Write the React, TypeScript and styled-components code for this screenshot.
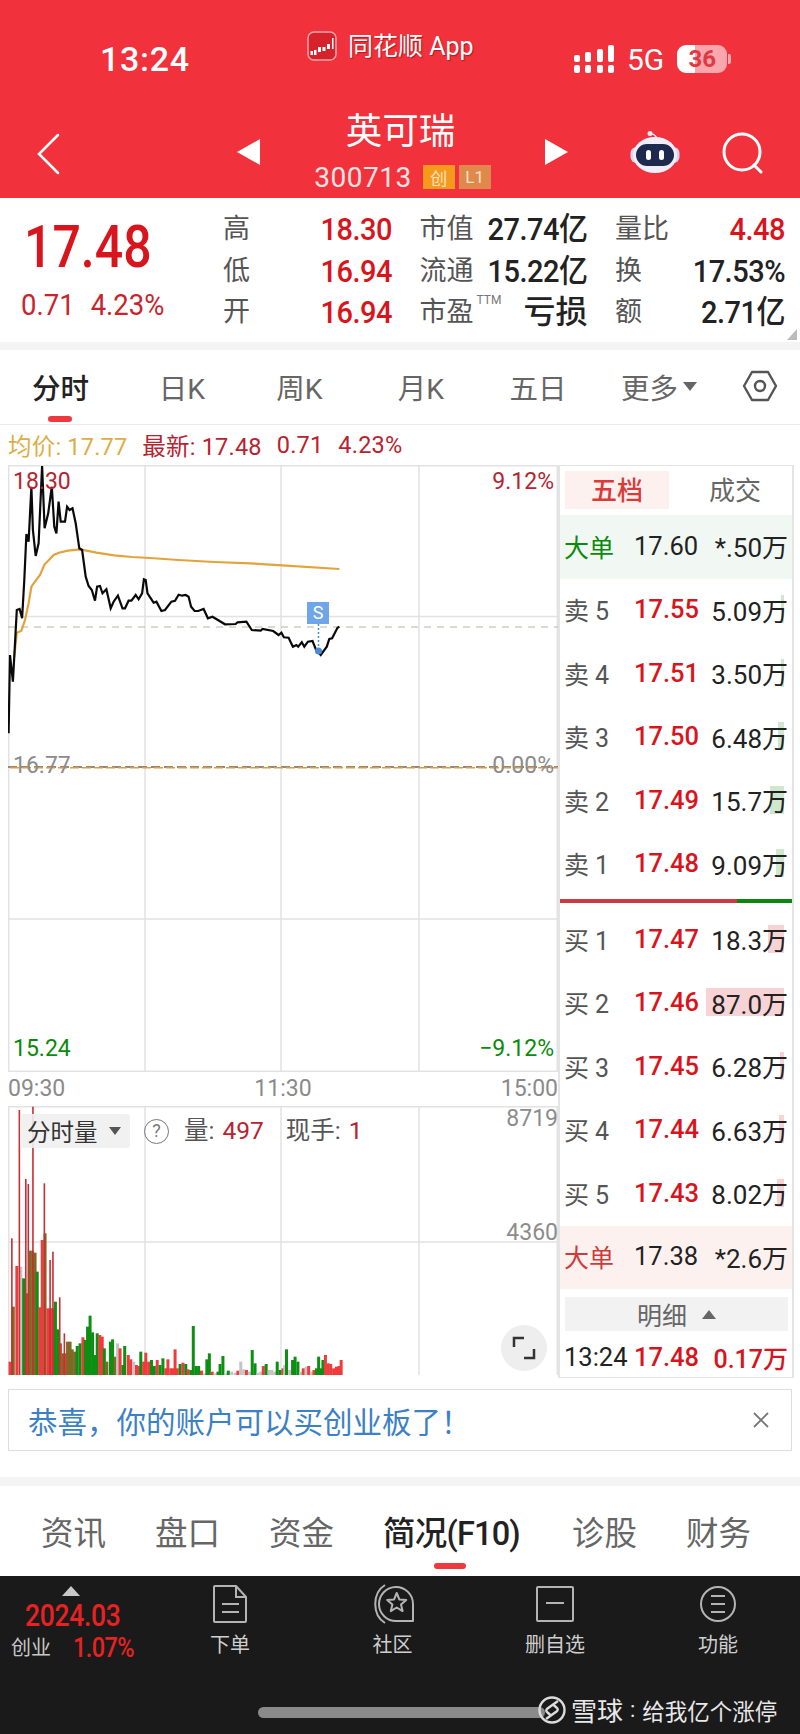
import styled, { createGlobalStyle } from 'styled-components'

const RED = '#d8141c'
const GREEN = '#0a8a0a'
const SANS = `Roboto, 'Noto Sans CJK SC', sans-serif`

const GlobalStyle = createGlobalStyle`
  html, body { margin: 0; padding: 0; background: #fff; }
  * { box-sizing: border-box; }
  body { font-family: ${SANS}; }
`

// price line, in coordinates read off the reference crop
const priceLine = [
  [24, 910], [28, 675], [36, 755], [42, 640], [47, 540], [55, 537], [62, 565], [68, 450], [74, 312], [80, 335],
  [88, 170], [92, 300], [100, 378], [108, 340], [118, 108], [125, 295], [135, 250], [145, 170], [152, 290], [158, 310],
  [164, 215], [170, 275], [182, 275], [188, 230], [195, 240], [203, 235], [212, 280], [222, 355], [230, 360], [240, 440],
  [248, 468], [257, 480], [266, 512], [272, 470], [280, 468], [287, 490], [298, 478], [310, 535], [318, 515], [330, 497],
  [343, 535], [350, 535], [360, 512], [368, 512], [380, 495], [388, 508], [398, 490], [403, 448], [408, 450], [413, 490],
  [430, 518], [438, 515], [452, 543], [462, 540], [480, 515], [490, 512], [500, 494], [510, 497], [520, 495], [528, 500],
  [535, 530], [545, 543], [555, 543], [570, 537], [582, 565], [595, 560], [610, 570], [630, 583], [660, 582], [665, 577],
  [690, 575], [705, 600], [730, 602], [735, 597], [765, 603], [780, 615], [788, 608], [795, 622], [808, 623], [820, 650],
  [830, 645], [835, 650], [845, 637], [852, 650], [862, 635], [875, 633], [885, 660], [898, 675], [915, 650], [922, 627],
  [930, 625], [945, 593], [950, 590],
]

const avgLine = [
  [40, 680], [47, 608], [60, 602], [70, 570], [80, 520], [88, 470], [100, 452], [112, 435], [125, 403], [135, 392],
  [150, 375], [165, 368], [190, 362], [225, 358], [270, 368], [320, 376], [370, 381], [420, 384], [500, 390], [600, 396],
  [700, 400], [790, 406], [950, 417],
]

const toPricePoints = (pts: number[][]) => pts.map(([x, y]) => `${(x / 2.8 - 8).toFixed(1)},${(y / 3 - 35).toFixed(1)}`).join(' ')

const volColors: Record<string, string> = { r: '#ee3b3b', g: '#0d8f14', o: '#7d6a24', a: '#c4c4c4' }

const volBars: [string, number, number][] = [
  ['r', 24, 905], ['o', 33, 740], ['r', 43, 618], ['a', 54, 620], ['g', 62, 655], ['r', 70, 700], ['o', 79, 572], ['o', 87, 572],
  ['o', 94, 578], ['g', 100, 635], ['r', 107, 742], ['r', 114, 540], ['o', 122, 520], ['r', 130, 745], ['r', 137, 745], ['r', 144, 745],
  ['g', 151, 725], ['g', 158, 808], ['r', 165, 850], ['o', 172, 880], ['r', 179, 880], ['o', 185, 845], ['o', 192, 845], ['o', 198, 868],
  ['o', 205, 875], ['g', 212, 858], ['g', 220, 850], ['r', 228, 832], ['g', 235, 840], ['g', 241, 800], ['g', 248, 767], ['g', 255, 817],
  ['g', 262, 885], ['g', 268, 820], ['r', 275, 825], ['r', 282, 830], ['g', 288, 865], ['o', 295, 905], ['g', 305, 845], ['g', 311, 838],
  ['o', 318, 890], ['a', 325, 850], ['r', 332, 865], ['g', 340, 915], ['g', 345, 858], ['r', 355, 885], ['r', 362, 898], ['a', 370, 905],
  ['r', 378, 915], ['r', 385, 918], ['g', 390, 875], ['r', 398, 905], ['r', 404, 878], ['r', 412, 905], ['g', 420, 900], ['g', 428, 918],
  ['r', 436, 900], ['g', 444, 915], ['g', 452, 895], ['r', 460, 925], ['r', 466, 898], ['r', 474, 925], ['r', 480, 925], ['r', 486, 868],
  ['r', 492, 925], ['g', 500, 912], ['r', 508, 908], ['g', 516, 912], ['r', 522, 928], ['g', 530, 930], ['g', 537, 798], ['g', 545, 918],
  ['g', 552, 918], ['r', 560, 932], ['a', 568, 940], ['g', 575, 898], ['g', 582, 880], ['r', 590, 935], ['a', 598, 940], ['g', 606, 935],
  ['g', 612, 912], ['g', 620, 888], ['a', 628, 940], ['g', 635, 932], ['a', 645, 935], ['a', 655, 938], ['r', 662, 932], ['a', 670, 905],
  ['a', 678, 928], ['r', 686, 930], ['a', 694, 935], ['g', 702, 870], ['g', 710, 910], ['a', 718, 938], ['a', 726, 935], ['r', 733, 918],
  ['g', 741, 912], ['a', 750, 930], ['a', 757, 930], ['a', 765, 935], ['g', 772, 905], ['g', 780, 930], ['r', 788, 925], ['a', 793, 915],
  ['g', 798, 868], ['a', 807, 930], ['g', 815, 900], ['g', 822, 890], ['g', 830, 905], ['a', 838, 935], ['r', 845, 925], ['a', 853, 920],
  ['r', 860, 918], ['a', 868, 935], ['r', 875, 930], ['g', 882, 925], ['g', 888, 890], ['g', 895, 925], ['g', 900, 900], ['r', 907, 885],
  ['r', 915, 910], ['r', 922, 912], ['r', 930, 925], ['r', 938, 920], ['r', 945, 918], ['r', 951, 900],
]

const volSpikes = [[31, 535], [52, 150], [70, 357], [77, 372], [90, 140], [122, 370], [138, 600], [146, 575], [165, 712], [178, 820]]

const sellRows = [
  { label: '卖', n: '5', price: '17.55', vol: '5.09万', bar: 3 },
  { label: '卖', n: '4', price: '17.51', vol: '3.50万', bar: 3 },
  { label: '卖', n: '3', price: '17.50', vol: '6.48万', bar: 6 },
  { label: '卖', n: '2', price: '17.49', vol: '15.7万', bar: 14 },
  { label: '卖', n: '1', price: '17.48', vol: '9.09万', bar: 8 },
]

const buyRows = [
  { label: '买', n: '1', price: '17.47', vol: '18.3万', bar: 16 },
  { label: '买', n: '2', price: '17.46', vol: '87.0万', bar: 78 },
  { label: '买', n: '3', price: '17.45', vol: '6.28万', bar: 4 },
  { label: '买', n: '4', price: '17.44', vol: '6.63万', bar: 5 },
  { label: '买', n: '5', price: '17.43', vol: '8.02万', bar: 7 },
]

const AppIcon = () => (
  <svg width='30' height='30' viewBox='0 0 30 30'>
    <rect x='1' y='1' width='28' height='28' rx='6' fill='#d6222a' stroke='#f7a5a9' strokeWidth='1.5' />
    <g fill='#fff'>
      <rect x='3.5' y='20' width='2.5' height='4' />
      <rect x='7' y='19' width='2.5' height='5' />
      <rect x='11' y='16' width='3' height='5' />
      <rect x='15.5' y='16' width='3' height='4' />
      <rect x='20' y='13' width='3' height='5' />
      <rect x='25' y='7' width='1.5' height='11' />
    </g>
  </svg>
)

const SignalIcon = () => (
  <svg width='40' height='28' viewBox='0 0 40 28' fill='#fff'>
    <rect x='0' y='10' width='6' height='7' rx='2' />
    <rect x='0' y='20' width='6' height='8' rx='2' />
    <rect x='11' y='7' width='6' height='10' rx='2' />
    <rect x='11' y='20' width='6' height='8' rx='2' />
    <rect x='23' y='4' width='6' height='13' rx='2' />
    <rect x='23' y='20' width='6' height='8' rx='2' />
    <rect x='34' y='0' width='6' height='17' rx='2' />
    <rect x='34' y='20' width='6' height='8' rx='2' />
  </svg>
)

const RobotIcon = () => (
  <svg width='50' height='46' viewBox='0 0 50 46'>
    <circle cx='20' cy='3.5' r='2.5' fill='#f3e6f6' />
    <path d='M21 4c3 0 5 2 6 5' fill='none' stroke='#f3e6f6' strokeWidth='1.5' />
    <rect x='0.5' y='17' width='49' height='16' rx='6' fill='#d9d4f2' />
    <ellipse cx='25' cy='25' rx='22' ry='18' fill='#f1eefb' />
    <rect x='6' y='14' width='38' height='22' rx='11' fill='#1d2a4d' />
    <rect x='16' y='20' width='5' height='10' rx='2.5' fill='#fff' />
    <rect x='29' y='20' width='5' height='10' rx='2.5' fill='#fff' />
  </svg>
)

const SearchIcon = () => (
  <svg width='42' height='42' viewBox='0 0 42 42' fill='none' stroke='#fff' strokeWidth='3'>
    <circle cx='20' cy='20' r='18' />
    <path d='M32 33l7 7' strokeLinecap='round' />
  </svg>
)

const HexIcon = () => (
  <svg width='36' height='32' viewBox='0 0 36 32' fill='none' stroke='#555' strokeWidth='2.4'>
    <path d='M10 2h16l8 14-8 14H10L2 16z' strokeLinejoin='round' />
    <circle cx='18' cy='16' r='5' />
  </svg>
)

const ExpandIcon = () => (
  <svg width='24' height='24' viewBox='0 0 24 24' fill='none' stroke='#333' strokeWidth='2.5'>
    <path d='M2 11V2h10M22 13v9H12' />
  </svg>
)

const DocIcon = () => (
  <svg width='36' height='40' viewBox='0 0 36 40' fill='none' stroke='#b4b4b4' strokeWidth='2'>
    <path d='M2 3a1 1 0 0 1 1-1h21l10 11v24a1 1 0 0 1-1 1H3a1 1 0 0 1-1-1z' strokeLinejoin='round' />
    <path d='M24 2v11h10M10 20h17M10 28h17' />
  </svg>
)

const CommunityIcon = () => (
  <svg width='42' height='42' viewBox='0 0 42 42' fill='none' stroke='#b4b4b4' strokeWidth='2'>
    <path d='M13 2C0 10 0 32 13 40' />
    <path d='M41 21v17H24.7A17 17 0 1 1 41 21z' strokeLinejoin='round' />
    <path d='M24.7 10l2.6 6.4 6.900.5-5.200 4.500 1.600 6.700-5.900-3.600-5.900 3.600 1.600-6.700-5.200-4.500 6.900-.5z' strokeLinejoin='round' />
  </svg>
)

const MinusBoxIcon = () => (
  <svg width='40' height='38' viewBox='0 0 40 38' fill='none' stroke='#b4b4b4' strokeWidth='2'>
    <rect x='2' y='2' width='36' height='34' rx='1' />
    <path d='M11 18h18' />
  </svg>
)

const MenuCircleIcon = () => (
  <svg width='38' height='38' viewBox='0 0 38 38' fill='none' stroke='#b4b4b4' strokeWidth='2'>
    <circle cx='19' cy='19' r='17' />
    <path d='M12 11h14M12 19h14M12 27h14' />
  </svg>
)

const XueqiuLogo = () => (
  <svg width='28' height='28' viewBox='0 0 28 28' fill='none' stroke='#dcdcdc' strokeWidth='2.4'>
    <circle cx='14' cy='14' r='12.5' />
    <path d='M20 5L9.5 12.5q-2.500 2 0 4l3.500 3' />
    <path d='M8 23l10.5-7.5q2.500-2 0-4L15 8.500' />
  </svg>
)

const OrderRow = ({ label, n, price, vol, bar, side }: { label: string; n: string; price: string; vol: string; bar: number; side: 'sell' | 'buy' }) => (
  <Row>
    <RowLabel>
      {label}
      <RowNum>{n}</RowNum>
    </RowLabel>
    <RowPrice>{price}</RowPrice>
    <RowVol>
      <VolBar $side={side} style={{ width: bar }} />
      <VolText>{vol}</VolText>
    </RowVol>
  </Row>
)

const App = () => {
  return (
    <Page>
      <GlobalStyle />
      <Header>
        <StatusBar>
          <Time>13:24</Time>
          <AppBadge>
            <AppIcon />
            <AppName>同花顺 App</AppName>
          </AppBadge>
          <StatusRight>
            <SignalIcon />
            <NetworkText>5G</NetworkText>
            <Battery>36</Battery>
          </StatusRight>
        </StatusBar>
        <TitleRow>
          <BackButton>
            <svg width='24' height='42' viewBox='0 0 24 42' fill='none' stroke='#fff' strokeWidth='2.5'>
              <path d='M22 2L3 21l19 19' strokeLinecap='round' />
            </svg>
          </BackButton>
          <Arrow $dir='left' />
          <TitleBlock>
            <StockName>英可瑞</StockName>
            <CodeRow>
              <StockCode>300713</StockCode>
              <Tag $bg='#f59a1c'>创</Tag>
              <Tag $bg='#df8a4c'>L1</Tag>
            </CodeRow>
          </TitleBlock>
          <Arrow $dir='right' />
          <TitleIcons>
            <RobotIcon />
            <SearchIcon />
          </TitleIcons>
        </TitleRow>
      </Header>

      <Stats>
        <PriceBlock>
          <BigPrice>17.48</BigPrice>
          <PriceChange>
            <span>0.71</span>
            <span>4.23%</span>
          </PriceChange>
        </PriceBlock>
        <StatsGrid>
          <StatCell><StatLabel>高</StatLabel><StatValue $red>18.30</StatValue></StatCell>
          <StatCell><StatLabel>市值</StatLabel><StatValue>27.74亿</StatValue></StatCell>
          <StatCell><StatLabel>量比</StatLabel><StatValue $red>4.48</StatValue></StatCell>
          <StatCell><StatLabel>低</StatLabel><StatValue $red>16.94</StatValue></StatCell>
          <StatCell><StatLabel>流通</StatLabel><StatValue>15.22亿</StatValue></StatCell>
          <StatCell><StatLabel>换</StatLabel><StatValue>17.53%</StatValue></StatCell>
          <StatCell><StatLabel>开</StatLabel><StatValue $red>16.94</StatValue></StatCell>
          <StatCell>
            <StatLabel>市盈<Ttm>TTM</Ttm></StatLabel>
            <LossValue>亏损</LossValue>
          </StatCell>
          <StatCell><StatLabel>额</StatLabel><StatValue>2.71亿</StatValue></StatCell>
        </StatsGrid>
        <CornerMark />
      </Stats>

      <Band />

      <ChartTabs>
        <ChartTab $w={121} $active>分时<TabDot /></ChartTab>
        <ChartTab $w={122}>日K</ChartTab>
        <ChartTab $w={113}>周K</ChartTab>
        <ChartTab $w={130}>月K</ChartTab>
        <ChartTab $w={104}>五日</ChartTab>
        <ChartTab $w={138}>更多<MoreCaret /></ChartTab>
        <HexWrap><HexIcon /></HexWrap>
      </ChartTabs>

      <Legend>
        <LegendAvg>均价: 17.77</LegendAvg>
        <LegendLast>最新: 17.48</LegendLast>
        <LegendLast>0.71</LegendLast>
        <LegendLast>4.23%</LegendLast>
      </Legend>

      <Market>
        <ChartColumn>
          <PriceChart>
            <ChartSvg viewBox='0 0 550 607'>
              <g stroke='#e2e2e2' strokeWidth='1.5' fill='none'>
                <rect x='0.7' y='0.7' width='548.6' height='605.6' />
                <path d='M137 0v607M273 0v607M411 0v607M0 151.5h550M0 454h550' />
              </g>
              <path d='M0 162h550' stroke='#b9b3a3' strokeWidth='1' strokeDasharray='7 6' />
              <path d='M0 302h550' stroke='#8a8a8a' strokeWidth='2' strokeDasharray='9 4' />
              <path d='M2 302.8h548' stroke='#e09a3a' strokeWidth='1.6' strokeDasharray='9 3' />
              <polyline points={toPricePoints(avgLine)} fill='none' stroke='#e3a33c' strokeWidth='2.2' />
              <polyline points={toPricePoints(priceLine)} fill='none' stroke='#0a0a0a' strokeWidth='2.2' />
              <path d='M310.5 159v26' stroke='#4a8ad8' strokeWidth='1.5' strokeDasharray='2 2' />
              <circle cx='310.5' cy='186' r='3.5' fill='#4a8ad8' />
            </ChartSvg>
            <ChartLabel $top={2} $left={5} $color='#b8232f'>18.30</ChartLabel>
            <ChartLabel $top={2} $right={4} $color='#b8232f'>9.12%</ChartLabel>
            <ChartLabel $top={286} $left={5} $color='#8c8c8c'>16.77</ChartLabel>
            <ChartLabel $top={286} $right={4} $color='#8c8c8c'>0.00%</ChartLabel>
            <ChartLabel $top={569} $left={5} $color={GREEN}>15.24</ChartLabel>
            <ChartLabel $top={569} $right={4} $color={GREEN}>−9.12%</ChartLabel>
            <SMarker>S</SMarker>
          </PriceChart>
          <TimeAxis>
            <span>09:30</span>
            <span>11:30</span>
            <span>15:00</span>
          </TimeAxis>
          <VolumeChart>
            <ChartSvg viewBox='0 0 550 269'>
              <g stroke='#e2e2e2' strokeWidth='1.5' fill='none'>
                <path d='M0.7 269V0.7h548.6V269M137 0v269M273 0v269M411 0v269M0 136h550' />
              </g>
              {volBars.map(([c, x, top], i) => (
                <rect key={i} x={x / 2.8 - 8} y={top / 3 - 46} width={3} height={(945 - top) / 3} fill={volColors[c]} />
              ))}
              {volSpikes.map(([x, top], i) => (
                <rect key={i} x={x / 2.8 - 8} y={top / 3 - 46} width={1.6} height={(945 - top) / 3} fill='#c62f33' />
              ))}
            </ChartSvg>
            <VolumeBar>
              <VolumeSelect>分时量<SelectCaret /></VolumeSelect>
              <HelpMark>?</HelpMark>
              <VolumeInfo>量: <em>497</em></VolumeInfo>
              <VolumeInfo>现手: <em>1</em></VolumeInfo>
            </VolumeBar>
            <ChartLabel $top={-2} $right={0} $color='#8c8c8c'>8719</ChartLabel>
            <ChartLabel $top={112} $right={0} $color='#8c8c8c'>4360</ChartLabel>
            <ExpandButton><ExpandIcon /></ExpandButton>
          </VolumeChart>
        </ChartColumn>

        <QuotePanel>
          <QuoteTabs>
            <QuoteTab $active>五档</QuoteTab>
            <QuoteTab>成交</QuoteTab>
          </QuoteTabs>
          <BigRow $bg='#f1f8f3'>
            <BigLabel $color={GREEN}>大单</BigLabel>
            <BigPriceCell>17.60</BigPriceCell>
            <RowVol><VolText>*.50万</VolText></RowVol>
          </BigRow>
          {sellRows.map((r) => <OrderRow key={r.n} {...r} side='sell' />)}
          <SplitBar />
          {buyRows.map((r) => <OrderRow key={r.n} {...r} side='buy' />)}
          <BigRow $bg='#fdf1f0'>
            <BigLabel $color='#cf3a3a'>大单</BigLabel>
            <BigPriceCell>17.38</BigPriceCell>
            <RowVol><VolText>*2.6万</VolText></RowVol>
          </BigRow>
          <DetailBar>明细<DetailCaret /></DetailBar>
          <TickRow>
            <TickTime>13:24</TickTime>
            <RowPrice>17.48</RowPrice>
            <RowVol><TickVol>0.17万</TickVol></RowVol>
          </TickRow>
        </QuotePanel>
      </Market>

      <Notice>
        <NoticeText>恭喜，你的账户可以买创业板了！</NoticeText>
        <svg width='16' height='16' viewBox='0 0 16 16' fill='none' stroke='#777' strokeWidth='1.8'>
          <path d='M1 1l14 14M15 1L1 15' />
        </svg>
      </Notice>

      <BandLower />

      <InfoTabs>
        <InfoTab>资讯</InfoTab>
        <InfoTab>盘口</InfoTab>
        <InfoTab>资金</InfoTab>
        <InfoTab $active>简况(F10)<InfoDot /></InfoTab>
        <InfoTab>诊股</InfoTab>
        <InfoTab>财务</InfoTab>
      </InfoTabs>

      <BottomBar>
        <NavRow>
          <IndexBlock>
            <IndexCaret />
            <IndexValue>2024.03</IndexValue>
            <IndexLine>
              <IndexName>创业</IndexName>
              <IndexPct>1.07%</IndexPct>
            </IndexLine>
          </IndexBlock>
          <NavItem $w={162}><NavIcon><DocIcon /></NavIcon><NavText>下单</NavText></NavItem>
          <NavItem $w={163}><NavIcon><CommunityIcon /></NavIcon><NavText>社区</NavText></NavItem>
          <NavItem $w={162}><NavIcon><MinusBoxIcon /></NavIcon><NavText>删自选</NavText></NavItem>
          <NavItem $w={164}><NavIcon><MenuCircleIcon /></NavIcon><NavText>功能</NavText></NavItem>
        </NavRow>
        <HomeRow>
          <HomeBar />
          <Watermark>
            <XueqiuLogo />
            <WatermarkName>雪球</WatermarkName>
            <WatermarkSep>:</WatermarkSep>
            <WatermarkText>给我亿个涨停</WatermarkText>
          </Watermark>
        </HomeRow>
      </BottomBar>
    </Page>
  )
}

const Page = styled.div`
  display: flex;
  flex-direction: column;
  width: 800px;
  height: 1734px;
  overflow: hidden;
  background: #fff;
`

const Header = styled.header`
  height: 198px;
  background: #f1313b;
  color: #fff;
  flex-shrink: 0;
`

const StatusBar = styled.div`
  display: grid;
  grid-template-columns: 307px 267px 1fr;
  height: 110px;
`

const Time = styled.div`
  padding: 38px 0 0 100px;
  font-size: 34px;
  line-height: 42px;
  font-weight: 500;
  letter-spacing: 0.7px;
`

const AppBadge = styled.div`
  display: flex;
  align-items: flex-start;
  gap: 11px;
  padding-top: 31px;
  text-shadow: 1px 1px 1px rgba(120, 0, 0, 0.5);
`

const AppName = styled.span`
  font-size: 25px;
  line-height: 32px;
  white-space: nowrap;
`

const StatusRight = styled.div`
  display: flex;
  align-items: center;
  gap: 13px;
  height: 110px;
  padding-top: 8px;
`

const NetworkText = styled.span`
  font-size: 30px;
`

const Battery = styled.div`
  position: relative;
  width: 50px;
  height: 28px;
  border-radius: 9px;
  background: linear-gradient(90deg, #fff 36%, #f9a7ac 36%);
  color: #df3a44;
  font-size: 24px;
  font-weight: 700;
  line-height: 28px;
  text-align: center;
  &::after {
    content: '';
    position: absolute;
    right: -4px;
    top: 9px;
    width: 3px;
    height: 10px;
    border-radius: 0 2px 2px 0;
    background: #f9a7ac;
  }
`

const TitleRow = styled.div`
  display: grid;
  grid-template-columns: 237px 23px 285px 23px 1fr;
  height: 88px;
  align-items: center;
`

const BackButton = styled.div`
  display: flex;
  padding-left: 36px;
`

const Arrow = styled.div<{ $dir: 'left' | 'right' }>`
  width: 0;
  height: 0;
  margin-top: -4px;
  border-top: 13px solid transparent;
  border-bottom: 13px solid transparent;
  ${(p) => (p.$dir === 'left' ? 'border-right: 23px solid #fff;' : 'border-left: 23px solid #fff;')}
`

const TitleBlock = styled.div`
  display: flex;
  flex-direction: column;
  align-items: center;
  height: 88px;
`

const StockName = styled.div`
  font-size: 36.5px;
  line-height: 44px;
  margin-left: -4px;
  white-space: nowrap;
`

const CodeRow = styled.div`
  display: flex;
  align-items: center;
  gap: 4px;
  height: 26px;
  margin-top: 10px;
`

const StockCode = styled.span`
  font-size: 28px;
  margin-right: 7px;
  color: #fde4e5;
  letter-spacing: 0.5px;
`

const Tag = styled.span<{ $bg: string }>`
  width: 32px;
  height: 24px;
  display: flex;
  align-items: center;
  justify-content: center;
  background: ${(p) => p.$bg};
  color: #fbe3c4;
  font-size: 17px;
`

const TitleIcons = styled.div`
  display: flex;
  align-items: center;
  gap: 42px;
  padding: 0 0 2px 62px;
`

const Stats = styled.section`
  position: relative;
  display: flex;
  height: 144px;
  flex-shrink: 0;
`

const PriceBlock = styled.div`
  width: 223px;
  padding: 21px 0 0 21px;
`

const BigPrice = styled.div`
  font-size: 50px;
  line-height: 56px;
  font-weight: 500;
  color: ${RED};
  padding-left: 3px;
  transform: scaleY(1.17);
`

const PriceChange = styled.div`
  display: flex;
  gap: 16px;
  margin-top: 13px;
  font-size: 27.5px;
  line-height: 34px;
  color: #c9242c;
  transform: scaleY(1.1);
`

const StatsGrid = styled.div`
  display: grid;
  grid-template-columns: 169px 168px 170px;
  grid-auto-rows: 41.5px;
  column-gap: 27.5px;
  padding-top: 11px;
`

const StatCell = styled.div`
  display: flex;
  align-items: center;
  justify-content: space-between;
  line-height: 1.15;
`

const StatLabel = styled.span`
  position: relative;
  font-size: 27px;
  color: #555;
`

const Ttm = styled.span`
  position: absolute;
  left: 57px;
  top: -3px;
  font-size: 12px;
  color: #777;
`

const StatValue = styled.span<{ $red?: boolean }>`
  font-size: 29px;
  font-weight: 500;
  letter-spacing: -0.5px;
  color: ${(p) => (p.$red ? RED : '#222')};
  transform: scaleY(1.1);
`

const LossValue = styled.span`
  font-size: 32px;
  font-weight: 500;
  color: #222;
`

const CornerMark = styled.div`
  position: absolute;
  right: 3px;
  bottom: 2px;
  width: 0;
  height: 0;
  border-left: 10px solid transparent;
  border-bottom: 11px solid #bbb;
`

const Band = styled.div`
  height: 8px;
  background: #f4f4f4;
  flex-shrink: 0;
`

const ChartTabs = styled.nav`
  display: flex;
  height: 75px;
  border-bottom: 1.5px solid #ececec;
  flex-shrink: 0;
`

const ChartTab = styled.div<{ $w: number; $active?: boolean }>`
  position: relative;
  width: ${(p) => p.$w}px;
  display: flex;
  align-items: center;
  justify-content: center;
  padding-bottom: 2px;
  font-size: 28.5px;
  font-weight: ${(p) => (p.$active ? 500 : 400)};
  color: ${(p) => (p.$active ? '#222' : '#666')};
`

const TabDot = styled.i`
  position: absolute;
  left: 48px;
  bottom: 2px;
  width: 24px;
  height: 6px;
  border-radius: 3px;
  background: #ee3a3f;
`

const MoreCaret = styled.i`
  margin-left: 5px;
  width: 0;
  height: 0;
  border-left: 7px solid transparent;
  border-right: 7px solid transparent;
  border-top: 9px solid #666;
`

const HexWrap = styled.div`
  display: flex;
  align-items: center;
  padding: 0 0 2px 14px;
`

const Legend = styled.div`
  display: flex;
  align-items: center;
  gap: 15px;
  height: 40px;
  padding: 0 0 0 8px;
  font-size: 23.5px;
  flex-shrink: 0;
  letter-spacing: 0.2px;
`

const LegendAvg = styled.span`
  color: #dcae45;
`

const LegendLast = styled.span`
  color: #b8232f;
`

const Market = styled.div`
  display: flex;
  height: 913px;
  padding-left: 8px;
  flex-shrink: 0;
`

const ChartColumn = styled.div`
  width: 550px;
  display: flex;
  flex-direction: column;
`

const PriceChart = styled.div`
  position: relative;
  height: 607px;
`

const ChartSvg = styled.svg`
  display: block;
  width: 100%;
  height: 100%;
`

const ChartLabel = styled.span<{ $top: number; $left?: number; $right?: number; $color: string }>`
  position: absolute;
  top: ${(p) => p.$top}px;
  ${(p) => (p.$left !== undefined ? `left: ${p.$left}px;` : '')}
  ${(p) => (p.$right !== undefined ? `right: ${p.$right}px;` : '')}
  font-size: 23px;
  line-height: 30px;
  color: ${(p) => p.$color};
`

const SMarker = styled.div`
  position: absolute;
  left: 299px;
  top: 137px;
  width: 22px;
  height: 22px;
  background: #6fa6ea;
  color: #fff;
  font-size: 18px;
  line-height: 22px;
  text-align: center;
`

const TimeAxis = styled.div`
  display: flex;
  justify-content: space-between;
  align-items: center;
  height: 34px;
  padding-bottom: 2px;
  font-size: 23px;
  color: #8a8a8a;
`

const VolumeChart = styled.div`
  position: relative;
  height: 269px;
`

const VolumeBar = styled.div`
  position: absolute;
  left: 12px;
  top: 8px;
  display: flex;
  align-items: center;
`

const VolumeSelect = styled.div`
  display: flex;
  align-items: center;
  width: 110px;
  height: 34px;
  padding-left: 7px;
  border-radius: 3px;
  background: rgba(240, 240, 240, 0.9);
  color: #333;
  font-size: 23.5px;
`

const SelectCaret = styled.i`
  margin-left: 11px;
  width: 0;
  height: 0;
  border-left: 6px solid transparent;
  border-right: 6px solid transparent;
  border-top: 8px solid #555;
`

const HelpMark = styled.div`
  width: 25px;
  height: 25px;
  margin: 0 15px 0 14px;
  border: 1.5px solid #777;
  border-radius: 50%;
  color: #777;
  font-size: 18px;
  line-height: 22px;
  text-align: center;
`

const VolumeInfo = styled.div`
  margin-right: 22px;
  font-size: 24.5px;
  line-height: 32px;
  color: #555;
  em {
    font-style: normal;
    margin-left: 2px;
    color: #b8232f;
  }
`

const ExpandButton = styled.div`
  position: absolute;
  left: 493px;
  top: 219px;
  width: 46px;
  height: 46px;
  display: flex;
  align-items: center;
  justify-content: center;
  border-radius: 50%;
  background: #eee;
`

const QuotePanel = styled.aside`
  width: 236px;
  height: 913px;
  border: solid #e4e4e4;
  border-width: 1.5px 2px;
`

const QuoteTabs = styled.div`
  display: flex;
  height: 49px;
  padding: 5px 0 0 5px;
`

const QuoteTab = styled.div<{ $active?: boolean }>`
  width: ${(p) => (p.$active ? '104px' : '122px')};
  height: 38px;
  display: flex;
  align-items: center;
  justify-content: center;
  padding-bottom: 3px;
  padding-left: ${(p) => (p.$active ? '0' : '10px')};
  font-size: 26px;
  font-weight: ${(p) => (p.$active ? 500 : 400)};
  color: ${(p) => (p.$active ? '#d93a3a' : '#666')};
  background: ${(p) => (p.$active ? '#fdf1f0' : 'transparent')};
`

const Row = styled.div`
  display: grid;
  grid-template-columns: 70px 66px 1fr;
  align-items: center;
  height: 63.5px;
  padding: 0 4px 2px 4px;
`

const BigRow = styled(Row)<{ $bg: string }>`
  background: ${(p) => p.$bg};
`

const RowLabel = styled.div`
  font-size: 25px;
  color: #555;
`

const BigLabel = styled.div<{ $color: string }>`
  font-size: 25px;
  color: ${(p) => p.$color};
`

const RowNum = styled.span`
  margin-left: 6px;
`

const RowPrice = styled.div`
  font-size: 25.5px;
  font-weight: 500;
  color: ${RED};
`

const BigPriceCell = styled.div`
  font-size: 25.5px;
  color: #222;
`

const RowVol = styled.div`
  position: relative;
  display: flex;
  justify-content: flex-end;
  font-size: 26px;
  color: #222;
  white-space: nowrap;
`

const VolBar = styled.i<{ $side: 'sell' | 'buy' }>`
  position: absolute;
  right: 4px;
  top: 50%;
  height: 28px;
  transform: translateY(-50%);
  background: ${(p) => (p.$side === 'sell' ? '#cfe6cf' : '#f8d3d6')};
`

const VolText = styled.span`
  position: relative;
`

const SplitBar = styled.div`
  height: 4px;
  margin: 3px 0 5px;
  background: linear-gradient(90deg, #cf3a42 76.5%, #0c860c 76.5%);
`

const DetailBar = styled.div`
  display: flex;
  align-items: center;
  justify-content: center;
  height: 34px;
  margin: 8px 4px 0 5px;
  background: #f2f2f2;
  color: #666;
  font-size: 25px;
`

const DetailCaret = styled.i`
  margin-left: 15px;
  width: 0;
  height: 0;
  border-left: 7px solid transparent;
  border-right: 7px solid transparent;
  border-bottom: 9px solid #666;
`

const TickRow = styled(Row)`
  height: 44px;
  padding: 8px 4px 0 4px;
`

const TickTime = styled.span`
  font-size: 25.5px;
  color: #222;
`

const TickVol = styled.span`
  font-size: 25px;
  font-weight: 500;
  color: ${RED};
`

const Notice = styled.div`
  display: flex;
  align-items: center;
  justify-content: space-between;
  height: 62px;
  margin: 11px 8px 0;
  padding: 0 22px 0 19px;
  border: 1.5px solid #ddd;
  flex-shrink: 0;
`

const NoticeText = styled.span`
  font-size: 29.5px;
  color: #3c80c6;
`

const BandLower = styled.div`
  height: 9px;
  margin-top: 26px;
  background: #f4f4f4;
  flex-shrink: 0;
`

const InfoTabs = styled.nav`
  display: flex;
  gap: 49px;
  height: 90px;
  padding-left: 41px;
  flex-shrink: 0;
`

const InfoTab = styled.div<{ $active?: boolean }>`
  position: relative;
  display: flex;
  align-items: center;
  padding-bottom: 2px;
  font-size: 32.5px;
  font-weight: ${(p) => (p.$active ? 500 : 400)};
  letter-spacing: ${(p) => (p.$active ? '-0.8px' : '0')};
  color: ${(p) => (p.$active ? '#222' : '#666')};
  white-space: nowrap;
  margin-right: ${(p) => (p.$active ? '3px' : '0')};
`

const InfoDot = styled.i`
  position: absolute;
  left: 51px;
  bottom: 7px;
  width: 32px;
  height: 6px;
  border-radius: 3px;
  background: #ee3a3f;
`

const BottomBar = styled.footer`
  flex: 1;
  background: #1a1a1a;
`

const NavRow = styled.div`
  display: flex;
  height: 112px;
`

const IndexBlock = styled.div`
  width: 149px;
  display: flex;
  flex-direction: column;
  padding: 10px 0 0 11px;
`

const IndexCaret = styled.i`
  width: 0;
  height: 0;
  margin-left: 51px;
  border-left: 9px solid transparent;
  border-right: 9px solid transparent;
  border-bottom: 10px solid #c8c8c8;
`

const IndexValue = styled.div`
  margin: 4px 0 0 14px;
  font-size: 26.5px;
  line-height: 32px;
  font-weight: 500;
  color: #e62222;
  letter-spacing: -0.3px;
  transform: scaleY(1.15);
  transform-origin: left center;
`

const IndexLine = styled.div`
  display: flex;
  align-items: center;
  gap: 22px;
`

const IndexName = styled.span`
  font-size: 20px;
  color: #c8c8c8;
`

const IndexPct = styled.span`
  font-size: 23.5px;
  font-weight: 500;
  letter-spacing: -0.6px;
  color: #e62222;
  transform: scaleY(1.2);
`

const NavItem = styled.div<{ $w: number }>`
  width: ${(p) => p.$w}px;
  display: flex;
  flex-direction: column;
  align-items: center;
  padding-top: 8px;
`

const NavIcon = styled.div`
  height: 40px;
  display: flex;
  align-items: center;
`

const NavText = styled.div`
  margin-top: 5px;
  font-size: 20px;
  color: #cfcfcf;
`

const HomeRow = styled.div`
  position: relative;
  display: flex;
  padding: 19px 0 0 258px;
`

const HomeBar = styled.div`
  width: 287px;
  height: 11px;
  border-radius: 6px;
  background: #8a8a8a;
`

const Watermark = styled.div`
  position: absolute;
  left: 538px;
  top: 3px;
  display: flex;
  align-items: center;
  color: #e8e8e8;
  white-space: nowrap;
`

const WatermarkName = styled.span`
  margin-left: 5px;
  font-size: 26px;
`

const WatermarkSep = styled.span`
  margin: 0 7px;
  font-size: 22px;
`

const WatermarkText = styled.span`
  font-size: 22.5px;
`

export default App
